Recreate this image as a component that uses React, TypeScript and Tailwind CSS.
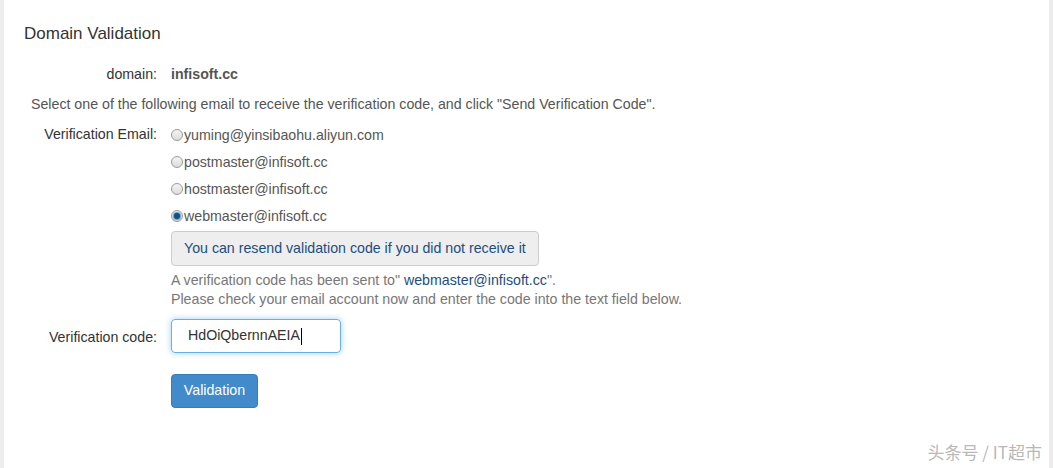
import React from "react";

const emails = [
  "yuming@yinsibaohu.aliyun.com",
  "postmaster@infisoft.cc",
  "hostmaster@infisoft.cc",
  "webmaster@infisoft.cc",
];

function Radio({ checked }: { checked: boolean }) {
  return (
    <span className="inline-flex items-center justify-center w-[12px] h-[12px] rounded-full border border-[#9a9a9a] bg-gradient-to-b from-[#f4f4f4] to-[#dcdcdc] mr-[1px]">
      {checked && <span className="w-[6px] h-[6px] rounded-full bg-[#1b4f7a] shadow-[0_0_1px_1px_#4aa0d8]" />}
    </span>
  );
}

export default function App() {
  return (
    <div
      className="w-[1053px] h-[468px] bg-white flex text-[14.2px] text-[#555]"
      style={{ fontFamily: '"Liberation Sans", Arial, sans-serif' }}
    >
      <div className="w-[4px] bg-[#ececec]" />
      <div className="flex-1 relative pl-[20px]">
        <div className="pt-[23px] text-[17px] text-[#333] leading-[22px]">Domain Validation</div>

        <div className="flex mt-[19px] leading-[20px]">
          <div className="w-[133px] text-right text-[#333]">domain:</div>
          <div className="ml-[14px] font-bold text-[#555]">infisoft.cc</div>
        </div>

        <div className="mt-[10px] ml-[7px] leading-[20px]">
          Select one of the following email to receive the verification code, and click "Send Verification Code".
        </div>

        <div className="flex mt-[11px]">
          <div className="w-[133px] text-right text-[#333] leading-[20px] -mt-[1px]">Verification Email:</div>
          <div className="ml-[14px] flex flex-col">
            <div className="flex flex-col gap-[7px]">
              {emails.map((e, i) => (
                <div key={e} className="flex items-center leading-[20px]">
                  <Radio checked={i === 3} />
                  <span>{e}</span>
                </div>
              ))}
            </div>
            <div className="mt-[5px]">
              <div className="inline-flex items-center h-[35px] px-[12px] border border-[#ccc] rounded-[4px] bg-[#eeeeee] text-[#1c4d80]">
                You can resend validation code if you did not receive it
              </div>
            </div>
            <div className="mt-[5px] leading-[19px] text-[#777]">
              A verification code has been sent to" <span className="text-[#1c4d80]">webmaster@infisoft.cc</span>".
            </div>
            <div className="leading-[19px] text-[#777]">
              Please check your email account now and enter the code into the text field below.
            </div>
          </div>
        </div>

        <div className="flex items-start mt-[10px]">
          <div className="w-[133px] text-right text-[#333] leading-[20px] mt-[8px]">Verification code:</div>
          <div className="ml-[14px] w-[170px] h-[34px] border border-[#66afe9] rounded-[4px] shadow-[0_0_6px_rgba(102,175,233,0.6)] flex items-center pl-[16px] text-[#333]">
            HdOiQbernnAEIA<span className="w-[1px] h-[17px] bg-black ml-[1px]" />
          </div>
        </div>

        <div className="ml-[147px] mt-[21px]">
          <div className="inline-flex items-center justify-center w-[87px] h-[34px] rounded-[4px] bg-[#428bca] border border-[#357ebd] text-white">
            Validation
          </div>
        </div>

        <div
          className="absolute right-[7px] bottom-[4px] text-[17px] text-[#b8b8b8]"
          style={{ fontFamily: '"Noto Sans CJK SC", "Liberation Sans", sans-serif' }}
        >
          头条号 / IT超市
        </div>
      </div>
      <div className="w-[4px] bg-[#ececec]" />
    </div>
  );
}
